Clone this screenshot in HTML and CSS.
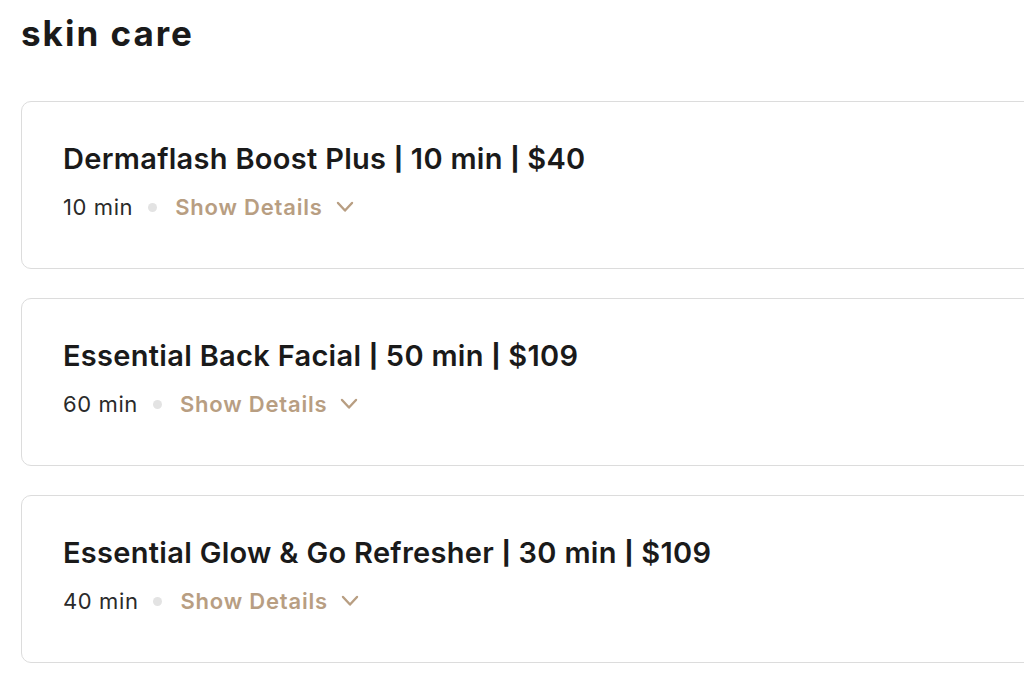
FILE: index.html
```html
<!DOCTYPE html>
<html>
<head>
<meta charset="utf-8">
<link rel="stylesheet" href="styles.css">
</head>
<body>
<main class="page">
  <h1 class="heading">skin care</h1>
  <div class="list">
    <div class="card">
      <div class="title">Dermaflash Boost Plus <span class="sep">|</span> 10 min <span class="sep">|</span> $40</div>
      <div class="meta">
        <span class="dur">10 min</span>
        <span class="dot"></span>
        <span class="details">Show Details
          <svg class="chev" viewBox="0 0 20 12" width="20" height="12"><path d="M3 2 L10 9.5 L17 2" fill="none" stroke="currentColor" stroke-width="2.4" stroke-linecap="round" stroke-linejoin="round"/></svg>
        </span>
      </div>
    </div>
    <div class="card">
      <div class="title">Essential Back Facial <span class="sep">|</span> 50 min <span class="sep">|</span> $109</div>
      <div class="meta">
        <span class="dur">60 min</span>
        <span class="dot"></span>
        <span class="details">Show Details
          <svg class="chev" viewBox="0 0 20 12" width="20" height="12"><path d="M3 2 L10 9.5 L17 2" fill="none" stroke="currentColor" stroke-width="2.4" stroke-linecap="round" stroke-linejoin="round"/></svg>
        </span>
      </div>
    </div>
    <div class="card">
      <div class="title">Essential Glow &amp; Go Refresher <span class="sep">|</span> 30 min <span class="sep">|</span> $109</div>
      <div class="meta">
        <span class="dur">40 min</span>
        <span class="dot"></span>
        <span class="details">Show Details
          <svg class="chev" viewBox="0 0 20 12" width="20" height="12"><path d="M3 2 L10 9.5 L17 2" fill="none" stroke="currentColor" stroke-width="2.4" stroke-linecap="round" stroke-linejoin="round"/></svg>
        </span>
      </div>
    </div>
  </div>
</main>
</body>
</html>
```
FILE: styles.css
```css
html, body {
  margin: 0;
  padding: 0;
  background: #ffffff;
  overflow: hidden;
}
body {
  font-family: Inter, "Noto Sans", sans-serif;
  color: #1b1b1b;
}
.page {
  padding: 12px 0 0 21px;
}
.heading {
  margin: 0;
  font-size: 35px;
  line-height: 42px;
  font-weight: 700;
  letter-spacing: 2px;
  color: #1a1a1a;
}
.list {
  margin-top: 47px;
  display: flex;
  flex-direction: column;
  gap: 29px;
  width: 1060px;
}
.card {
  border: 1.5px solid #dcdcdc;
  border-radius: 10px;
  padding: 40px 40px 42px 41px;
  height: 168px;
  box-sizing: border-box;
}
.title {
  font-size: 29px;
  line-height: 34px;
  font-weight: 600;
  letter-spacing: 0.3px;
  color: #1a1a1a;
}
.sep {
  font-size: 0.8em;
  font-weight: 800;
  vertical-align: 0.08em;
}
.meta {
  margin-top: 18px;
  display: flex;
  align-items: center;
  font-size: 22px;
  line-height: 26px;
}
.dur {
  color: #2a2a2a;
  letter-spacing: 0.6px;
}
.dot {
  width: 9px;
  height: 9px;
  border-radius: 50%;
  background: #e3e3e3;
  margin: 0 18px 0 15px;
}
.details {
  display: flex;
  align-items: center;
  color: #b89e82;
  font-weight: 600;
  letter-spacing: 0.8px;
}
.chev {
  margin-left: 12px;
}
```
